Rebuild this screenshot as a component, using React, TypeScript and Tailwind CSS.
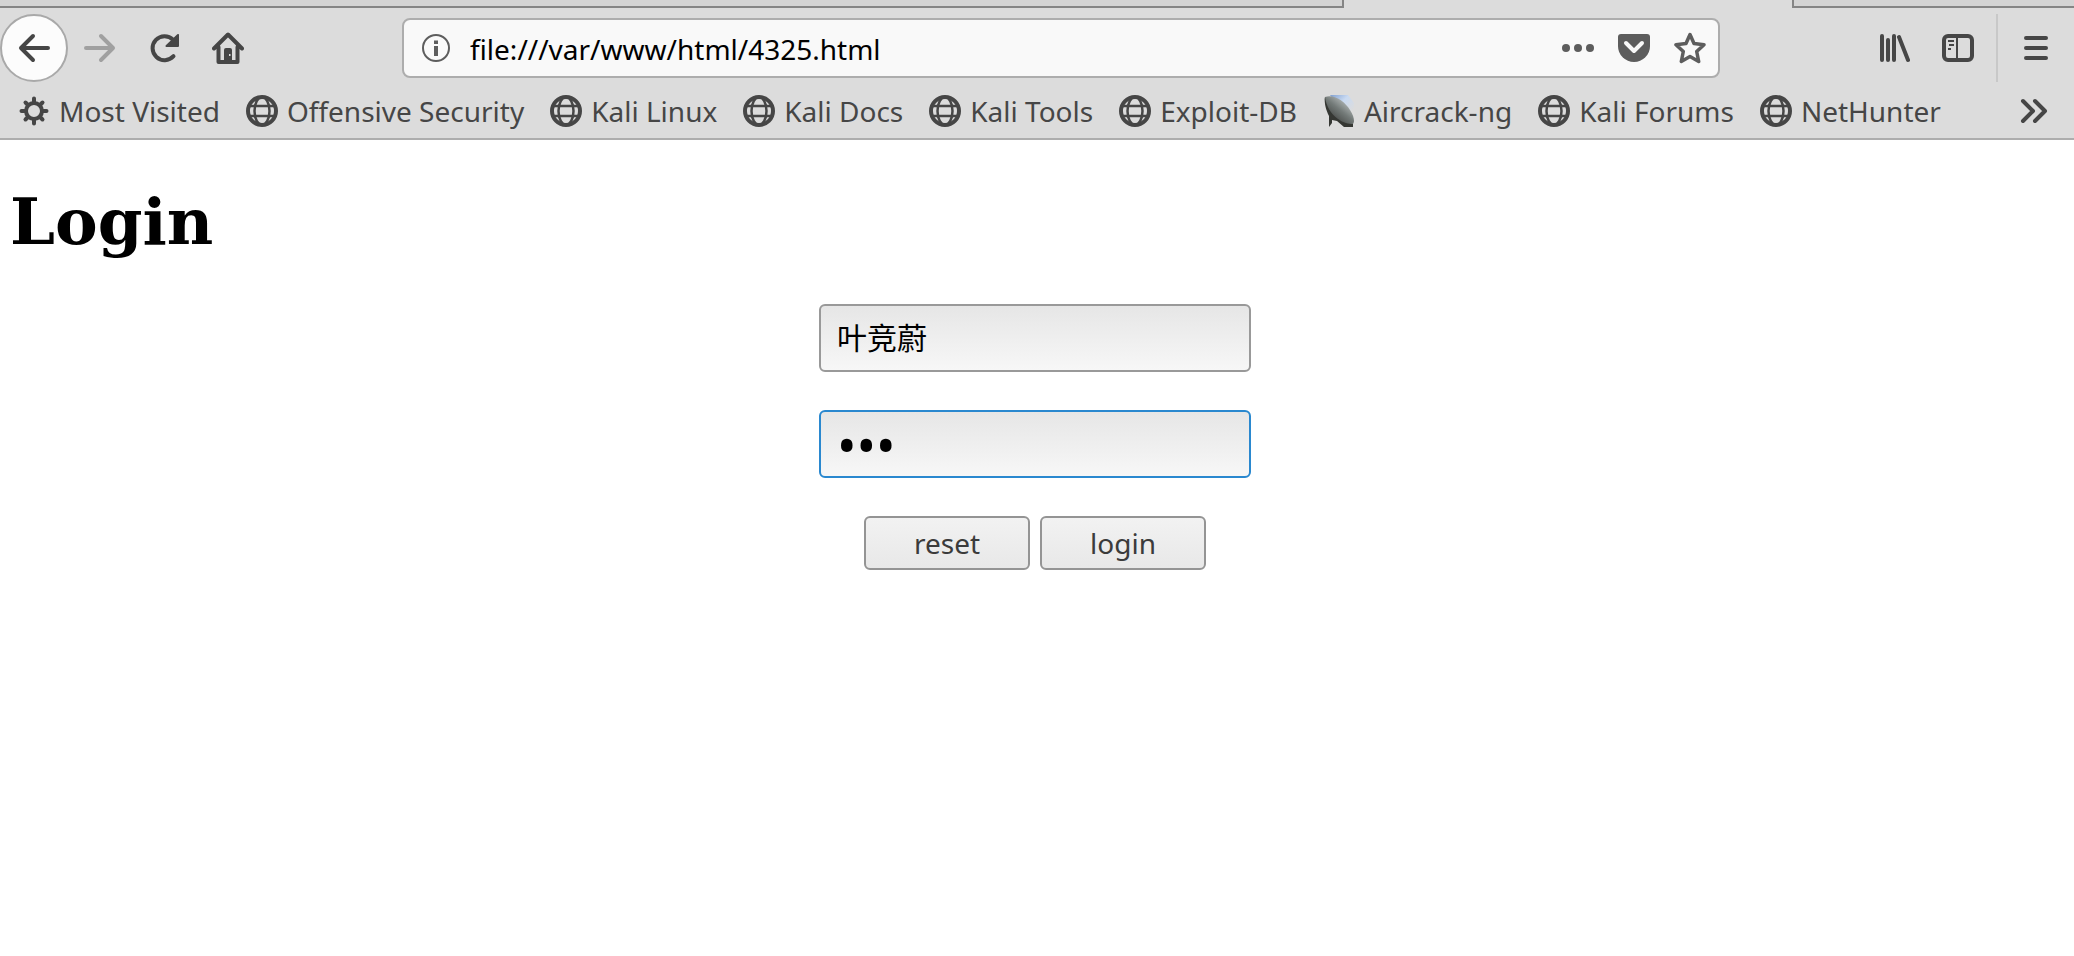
import React from "react";

function BackIcon() {
  return (
    <svg viewBox="0 0 32 32" className="size-8" fill="none" stroke="currentColor" strokeWidth="4" strokeLinecap="round" strokeLinejoin="round">
      <path d="M30 16H3M15 4L3 16l12 12" />
    </svg>
  );
}

function ForwardIcon() {
  return (
    <svg viewBox="0 0 32 32" className="size-8" fill="none" stroke="currentColor" strokeWidth="4" strokeLinecap="round" strokeLinejoin="round">
      <path d="M2 16h27M17 4l12 12-12 12" />
    </svg>
  );
}

function ReloadIcon() {
  return (
    <svg viewBox="0 0 32 32" className="size-8" fill="none">
      <path d="M25.5 24.2A12 12 0 1 1 25 7.6" stroke="currentColor" strokeWidth="4" strokeLinecap="round" />
      <path d="M31 3v11a1 1 0 0 1-1 1H18.500a1 1 0 0 1-.7-1.700L29.300 2.300A1 1 0 0 1 31 3z" fill="currentColor" />
    </svg>
  );
}

function HomeIcon() {
  return (
    <svg viewBox="0 0 32 32" className="size-8" fill="none">
      <path d="M2 16.500L16 2.500l14 14M6.500 15v15h19V15" stroke="currentColor" strokeWidth="4" strokeLinecap="round" strokeLinejoin="round" />
      <path d="M12 31V18a2 2 0 0 1 2-2h4a2 2 0 0 1 2 2v13z" fill="currentColor" />
      <rect x="17" y="22" width="1.500" height="2" fill="#dcdcdc" />
    </svg>
  );
}

function InfoIcon() {
  return (
    <svg viewBox="0 0 32 32" className="size-8" fill="none">
      <circle cx="16" cy="16" r="13" stroke="#5d5d5d" strokeWidth="2" />
      <path d="M14 8.500h4v3.500h-4zM14 14h4v10h-4z" fill="#5d5d5d" />
    </svg>
  );
}

function DotsIcon() {
  return (
    <svg viewBox="0 0 32 32" className="size-8" fill="currentColor">
      <circle cx="4" cy="16" r="4" />
      <circle cx="16" cy="16" r="4" />
      <circle cx="28" cy="16" r="4" />
    </svg>
  );
}

function PocketIcon() {
  return (
    <svg viewBox="0 0 32 32" className="size-8" fill="none">
      <path d="M3 2h26a3 3 0 0 1 3 3v9a16 16 0 0 1-32 0V5a3 3 0 0 1 3-3z" fill="currentColor" />
      <path d="M8 11l8 8 8-8" stroke="#f9f9f9" strokeWidth="4" strokeLinecap="round" strokeLinejoin="round" />
    </svg>
  );
}

function StarIcon() {
  return (
    <svg viewBox="0 0 32 32" className="size-8" fill="none" stroke="currentColor" strokeWidth="3.500" strokeLinejoin="round">
      <path d="M16 2.500l4 9 10 1.200-7.300 6.800 2 10L16 24.600l-8.700 4.900 2-10L2 12.700l10-1.200z" />
    </svg>
  );
}

function LibraryIcon() {
  return (
    <svg viewBox="0 0 32 32" className="size-8" fill="none" stroke="currentColor" strokeWidth="4" strokeLinecap="round">
      <path d="M4 4v24M10 8v20M16 4v24M21 5l9 23" />
    </svg>
  );
}

function SidebarIcon() {
  return (
    <svg viewBox="0 0 32 32" className="size-8" fill="none" stroke="currentColor">
      <rect x="2" y="4" width="28" height="24" rx="4" strokeWidth="4" />
      <path d="M15 4v24" strokeWidth="2" />
      <path d="M6 9h6M7 13h5M6 17h3" strokeWidth="2" />
    </svg>
  );
}

function MenuIcon() {
  return (
    <svg viewBox="0 0 32 32" className="size-8" fill="none" stroke="currentColor" strokeWidth="4" strokeLinecap="round">
      <path d="M6 6h20M6 16h20M6 26h20" />
    </svg>
  );
}

function ChevronsIcon() {
  return (
    <svg viewBox="0 0 32 32" className="size-8" fill="none" stroke="currentColor" strokeWidth="4" strokeLinecap="round" strokeLinejoin="round">
      <path d="M5 6l10 10L5 26M17 6l10 10-10 10" />
    </svg>
  );
}

function GearIcon() {
  return (
    <svg viewBox="0 0 32 32" className="size-8" fill="none" stroke="currentColor" strokeLinecap="round">
      <circle cx="16" cy="16" r="8" strokeWidth="4" />
      <path d="M16 3.500v4M16 24.500v4M3.500 16h4M24.500 16h4M7.500 7.500l2 2M22.500 22.500l2 2M7.500 24.500l2-2M22.500 9.500l2-2" strokeWidth="4" />
    </svg>
  );
}

function GlobeIcon() {
  return (
    <svg viewBox="0 0 32 32" className="size-8" fill="none" stroke="currentColor">
      <circle cx="16" cy="16" r="14" strokeWidth="4" />
      <ellipse cx="16" cy="16" rx="7.500" ry="14" strokeWidth="2.500" />
      <path d="M3 11h26M3 21h26" strokeWidth="2.500" />
    </svg>
  );
}

function DishIcon() {
  return (
    <svg viewBox="0 0 32 32" className="size-8">
      <defs>
        <linearGradient id="sky" x1="0" y1="0" x2="1" y2="1">
          <stop offset="0" stopColor="#7f9fd0" />
          <stop offset="0.400" stopColor="#c9daf2" />
          <stop offset="0.800" stopColor="#dcdcdc" />
        </linearGradient>
        <linearGradient id="dish" x1="0.800" y1="0.200" x2="0.300" y2="0.800">
          <stop offset="0" stopColor="#b4baba" />
          <stop offset="0.500" stopColor="#747b79" />
          <stop offset="1" stopColor="#4a4d4b" />
        </linearGradient>
      </defs>
      <path d="M7 0h18l6 8v16L10 4z" fill="url(#sky)" />
      <path d="M2 2C12-1 22 7 27 15c4 6 5 12 3 14-8 2-19-3-24-12C3 12 1 6 2 2z" fill="url(#dish)" />
      <path d="M2 2c1 9 6 17 13 22 5 4 11 5 15 5v3h-9l-7-6-5-1v3l-3 4V21C3 15 1 8 2 2z" fill="#353733" />
    </svg>
  );
}

const bookmarks = [
  { label: "Most Visited", Icon: GearIcon },
  { label: "Offensive Security", Icon: GlobeIcon },
  { label: "Kali Linux", Icon: GlobeIcon },
  { label: "Kali Docs", Icon: GlobeIcon },
  { label: "Kali Tools", Icon: GlobeIcon },
  { label: "Exploit-DB", Icon: GlobeIcon },
  { label: "Aircrack-ng", Icon: DishIcon },
  { label: "Kali Forums", Icon: GlobeIcon },
  { label: "NetHunter", Icon: GlobeIcon },
];

function TabStrip() {
  return (
    <div className="flex h-2 justify-between">
      <div className="w-[1344px] border-r-2 border-b-2 border-[#858585] bg-[#d4d4d4]" />
      <div className="w-[282px] border-b-2 border-l-2 border-[#858585] bg-[#d4d4d4]" />
    </div>
  );
}

function NavBar() {
  return (
    <nav aria-label="Navigation" className="flex h-20 items-center">
      <button aria-label="Back" className="flex size-[68px] shrink-0 items-center justify-center rounded-full border-2 border-[#a9a9a9] bg-[#fcfcfc]">
        <BackIcon />
      </button>
      <div className="ml-4 flex items-center gap-8">
        <button aria-label="Forward" className="text-[#a0a0a0]">
          <ForwardIcon />
        </button>
        <button aria-label="Reload">
          <ReloadIcon />
        </button>
        <button aria-label="Home">
          <HomeIcon />
        </button>
      </div>
      <div className="mr-[158px] ml-[158px] flex h-[60px] grow items-center rounded-lg border-2 border-[#adadad] bg-[#f9f9f9] pr-3 pl-4 text-[#5d5d5d]">
        <button aria-label="Site information">
          <InfoIcon />
        </button>
        <input aria-label="Address" defaultValue="file:///var/www/html/4325.html" className="ml-[18px] min-w-0 grow bg-transparent pt-0.5 text-black outline-none" />
        <div className="flex items-center gap-6">
          <button aria-label="Page actions">
            <DotsIcon />
          </button>
          <button aria-label="Save to Pocket">
            <PocketIcon />
          </button>
          <button aria-label="Bookmark this page">
            <StarIcon />
          </button>
        </div>
      </div>
      <div className="flex items-center gap-8">
        <button aria-label="Library">
          <LibraryIcon />
        </button>
        <button aria-label="Sidebars">
          <SidebarIcon />
        </button>
      </div>
      <div className="ml-[22px] flex h-[68px] items-center border-l-2 border-[#c8c8c8] pr-[22px] pl-[22px]">
        <button aria-label="Open menu">
          <MenuIcon />
        </button>
      </div>
    </nav>
  );
}

function BookmarksBar() {
  return (
    <div className="flex h-[50px] items-center justify-between pr-6 pb-1 pl-[18px]">
      <ul className="flex items-center gap-[26px]">
        {bookmarks.map(({ label, Icon }) => (
          <li key={label}>
            <a href="#" className="flex items-center gap-[9px] whitespace-nowrap">
              <Icon />
              {label}
            </a>
          </li>
        ))}
      </ul>
      <button aria-label="More bookmarks">
        <ChevronsIcon />
      </button>
    </div>
  );
}

function LoginForm() {
  const field =
    "h-[68px] w-[432px] rounded-md border-2 bg-linear-to-b from-[#e6e6e6] to-[#f7f7f7] px-4 text-black outline-none";
  const button =
    "h-[54px] rounded-md border-2 border-[#949494] bg-linear-to-b from-[#f2f2f2] to-[#e8e8e8] px-12 text-[#3b3b3b]";
  return (
    <form className="mt-11 flex flex-col items-center gap-[38px] pr-1" onSubmit={(e) => e.preventDefault()}>
      <input aria-label="Username" type="text" defaultValue="叶竞蔚" className={`${field} border-[#999999] pb-1 text-[30px]`} />
      <input aria-label="Password" type="password" defaultValue="123" className={`${field} border-[#2a88cf] text-[52px]`} />
      <div className="flex gap-[10px]">
        <button type="reset" className={button}>
          reset
        </button>
        <button type="submit" className={button}>
          login
        </button>
      </div>
    </form>
  );
}

export default function App() {
  return (
    <div className="min-h-screen bg-white font-['Noto_Sans','Noto_Sans_CJK_SC',sans-serif] text-[28px] leading-10">
      <header className="border-b-2 border-[#adadad] bg-[#dcdcdc] text-[#464646]">
        <TabStrip />
        <NavBar />
        <BookmarksBar />
      </header>
      <main className="px-[10px] pt-11">
        <h1 className="font-['DejaVu_Serif',serif] text-[64px] leading-[76px] font-bold text-black">Login</h1>
        <LoginForm />
      </main>
    </div>
  );
}
